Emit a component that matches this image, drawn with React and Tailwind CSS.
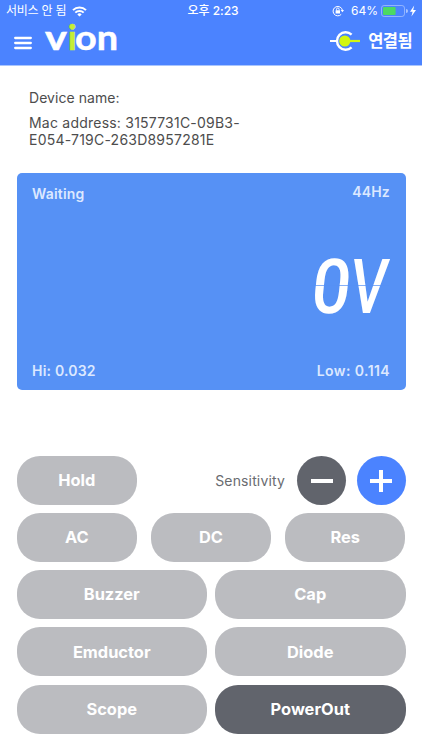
import React from "react";

const INTER = "font-['Inter','Noto_Sans_CJK_KR',sans-serif]";

function WifiIcon() {
  return (
    <svg width="15" height="11" viewBox="0 0 15 11" fill="none" stroke="white" strokeWidth="2">
      <path d="M1 4.1 A9.2 9.2 0 0 1 14 4.1" />
      <path d="M3.3 6.6 A6 6 0 0 1 11.7 6.6" />
      <path d="M7.5 10.6 L5.3 8.4 A3.1 3.1 0 0 1 9.7 8.4 Z" fill="white" stroke="none" />
    </svg>
  );
}

function RotationLockIcon() {
  return (
    <svg width="12" height="12" viewBox="0 0 12 12" fill="none" stroke="white" strokeWidth="1">
      <path d="M9.2 9.4 A4.7 4.7 0 1 1 10.4 5.2" />
      <path d="M8.7 5 H12 L10.4 7.3 Z" fill="white" stroke="none" />
      <rect x="3.6" y="5.2" width="4.4" height="3.4" rx="0.4" fill="white" stroke="none" />
      <path d="M4.5 5.4 V4.3 A1.3 1.3 0 0 1 7.1 4.3 V5.4" strokeWidth="0.9" />
    </svg>
  );
}

function BatteryIcon() {
  return (
    <svg width="36" height="12" viewBox="0 0 36 12">
      <rect x="0.5" y="0.5" width="23" height="11" rx="2.6" fill="none" stroke="#a9c4ff" strokeOpacity="0.75" />
      <rect x="2" y="2" width="12.6" height="8" rx="1" fill="#4cd964" />
      <path d="M25 4 A2 2 0 0 1 25 8 Z" fill="#a9c4ff" />
      <path d="M33.2 0.5 L29 6.7 H31.6 L30.4 11.5 L35 5.1 H32.2 Z" fill="white" />
    </svg>
  );
}

function MenuIcon() {
  return (
    <svg width="18" height="14" viewBox="0 0 18 14" stroke="white" strokeWidth="2.3" strokeLinecap="round">
      <path d="M1.2 2 H16.8 M1.2 7 H16.8 M1.2 12 H16.8" />
    </svg>
  );
}

function PlugIcon() {
  return (
    <svg width="30" height="20" viewBox="0 0 30 20" fill="none">
      <path d="M0 10 H6" stroke="white" strokeWidth="2" />
      <path d="M21.6 3.6 A8.7 8.7 0 1 0 21.6 16.4" stroke="white" strokeWidth="2.4" />
      <path d="M15 10 H30" stroke="#d3f611" strokeWidth="2.2" />
      <circle cx="14.8" cy="10" r="5.6" fill="#d3f611" />
    </svg>
  );
}

function StatusBar() {
  return (
    <div className="grid h-[22px] grid-cols-[1fr_auto_1fr] items-center pl-[6px] pr-[5px] text-[12px] leading-none">
      <div className="flex items-center gap-[6px]">
        <span className="tracking-[-0.25px]">서비스 안 됨</span>
        <WifiIcon />
      </div>
      <span className="pl-[3px] text-[12px] font-medium">오후 2:23</span>
      <div className="flex items-center justify-end">
        <RotationLockIcon />
        <span className="ml-[7px] mr-[3px] text-[12px]">64%</span>
        <BatteryIcon />
      </div>
    </div>
  );
}

function Logo() {
  return (
    <svg width="74" height="50" viewBox="0 0 74 50" className="-my-[10px] overflow-visible" role="img" aria-label="vion">
      <g fill="white" stroke="white" strokeWidth="0.5" fontFamily="Lato, sans-serif" fontWeight="700" fontSize="34">
        <text x="1" y="35" textLength="22" lengthAdjust="spacingAndGlyphs">v</text>
        <text x="23.7" y="35" fill="#c5ee35" stroke="#c5ee35" textLength="9" lengthAdjust="spacingAndGlyphs">i</text>
        <text x="31" y="35" textLength="43" lengthAdjust="spacingAndGlyphs">on</text>
      </g>
    </svg>
  );
}

function Header() {
  return (
    <header className="h-[66px] border-b border-[#a9c5fd] bg-[#4b83ff] text-white">
      <StatusBar />
      <div className="flex h-[42px] items-center pl-[14px] pr-[10px]">
        <MenuIcon />
        <div className="mb-[6px] ml-[12px]"><Logo /></div>
        <div className="ml-auto flex items-center gap-[8px] pb-[4px]">
          <PlugIcon />
          <span className="text-[16.5px] font-bold leading-5 tracking-[-0.6px]">연결됨</span>
        </div>
      </div>
    </header>
  );
}

function Reading() {
  return (
    <svg width="82" height="80" viewBox="0 0 82 80" className="-mr-[5px] overflow-visible">
      <g transform="translate(-3.5 68) skewX(-6)" fill="white" fontFamily="Roboto, sans-serif" fontWeight="500" fontSize="76">
        <text x="0" y="0" textLength="39" lengthAdjust="spacingAndGlyphs">0</text>
        <text x="38.5" y="0" textLength="37" lengthAdjust="spacingAndGlyphs">V</text>
        <path d="M-2 -27.5 H76" stroke="#5691f5" strokeWidth="0.7" />
      </g>
    </svg>
  );
}

function Pill({ label, dark }) {
  return (
    <button className={(dark ? "bg-[#61646c]" : "bg-[#bbbcc0]") + " h-[49px] rounded-[23px] text-[16.4px] font-bold text-white"}>
      {label}
    </button>
  );
}

export default function App() {
  return (
    <div className={"h-[750px] w-[422px] overflow-hidden bg-white " + INTER}>
      <Header />
      <div className="px-[29px] pt-[23px] text-[14px] leading-[17px] text-[#4d4d4d]">
        <p className="tracking-[0.05px]">Device name:</p>
        <p className="mt-[8px] w-[240px] tracking-[0.22px]">Mac address: 3157731C-09B3-<br />E054-719C-263D8957281E</p>
      </div>
      <section className="mx-[16.5px] mt-[25px] flex h-[217px] flex-col justify-between rounded-[5px] bg-[#5691f5] px-[15.5px] pb-[9px] pt-[9px] text-[14px] font-semibold leading-5 tracking-[0.2px] text-[#dce8ff]">
        <div className="flex justify-between">
          <span className="pt-[2px]">Waiting</span>
          <span>44Hz</span>
        </div>
        <div className="flex justify-end pt-[4px]"><Reading /></div>
        <div className="flex justify-between">
          <span>Hi: 0.032</span>
          <span className="tracking-[0.4px]">Low: 0.114</span>
        </div>
      </section>
      <div className="mx-[16.5px] mt-[66px] flex flex-col gap-[8.15px]">
        <div className="grid grid-cols-[120.5px_1fr_49px_49px] items-center">
          <Pill label="Hold" />
          <span className="pr-[22.5px] text-right text-[14px] tracking-[0.15px] text-[#696b70]">Sensitivity</span>
          <button aria-label="Decrease" className="-ml-[10.5px] flex size-[49px] items-center justify-center rounded-full bg-[#61646c]">
            <span className="h-[4px] w-[22px] bg-white" />
          </button>
          <button aria-label="Increase" className="grid size-[49px] place-items-center rounded-full bg-[#4b83ff]">
            <span className="col-start-1 row-start-1 h-[4px] w-[22px] bg-white" />
            <span className="col-start-1 row-start-1 h-[22px] w-[4px] bg-white" />
          </button>
        </div>
        <div className="grid grid-cols-3 gap-[13.7px]">
          <Pill label="AC" />
          <Pill label="DC" />
          <Pill label="Res" />
        </div>
        <div className="grid grid-cols-2 gap-x-[8px] gap-y-[8.15px]">
          <Pill label="Buzzer" />
          <Pill label="Cap" />
          <Pill label="Emductor" />
          <Pill label="Diode" />
          <Pill label="Scope" />
          <Pill label="PowerOut" dark />
        </div>
      </div>
    </div>
  );
}
